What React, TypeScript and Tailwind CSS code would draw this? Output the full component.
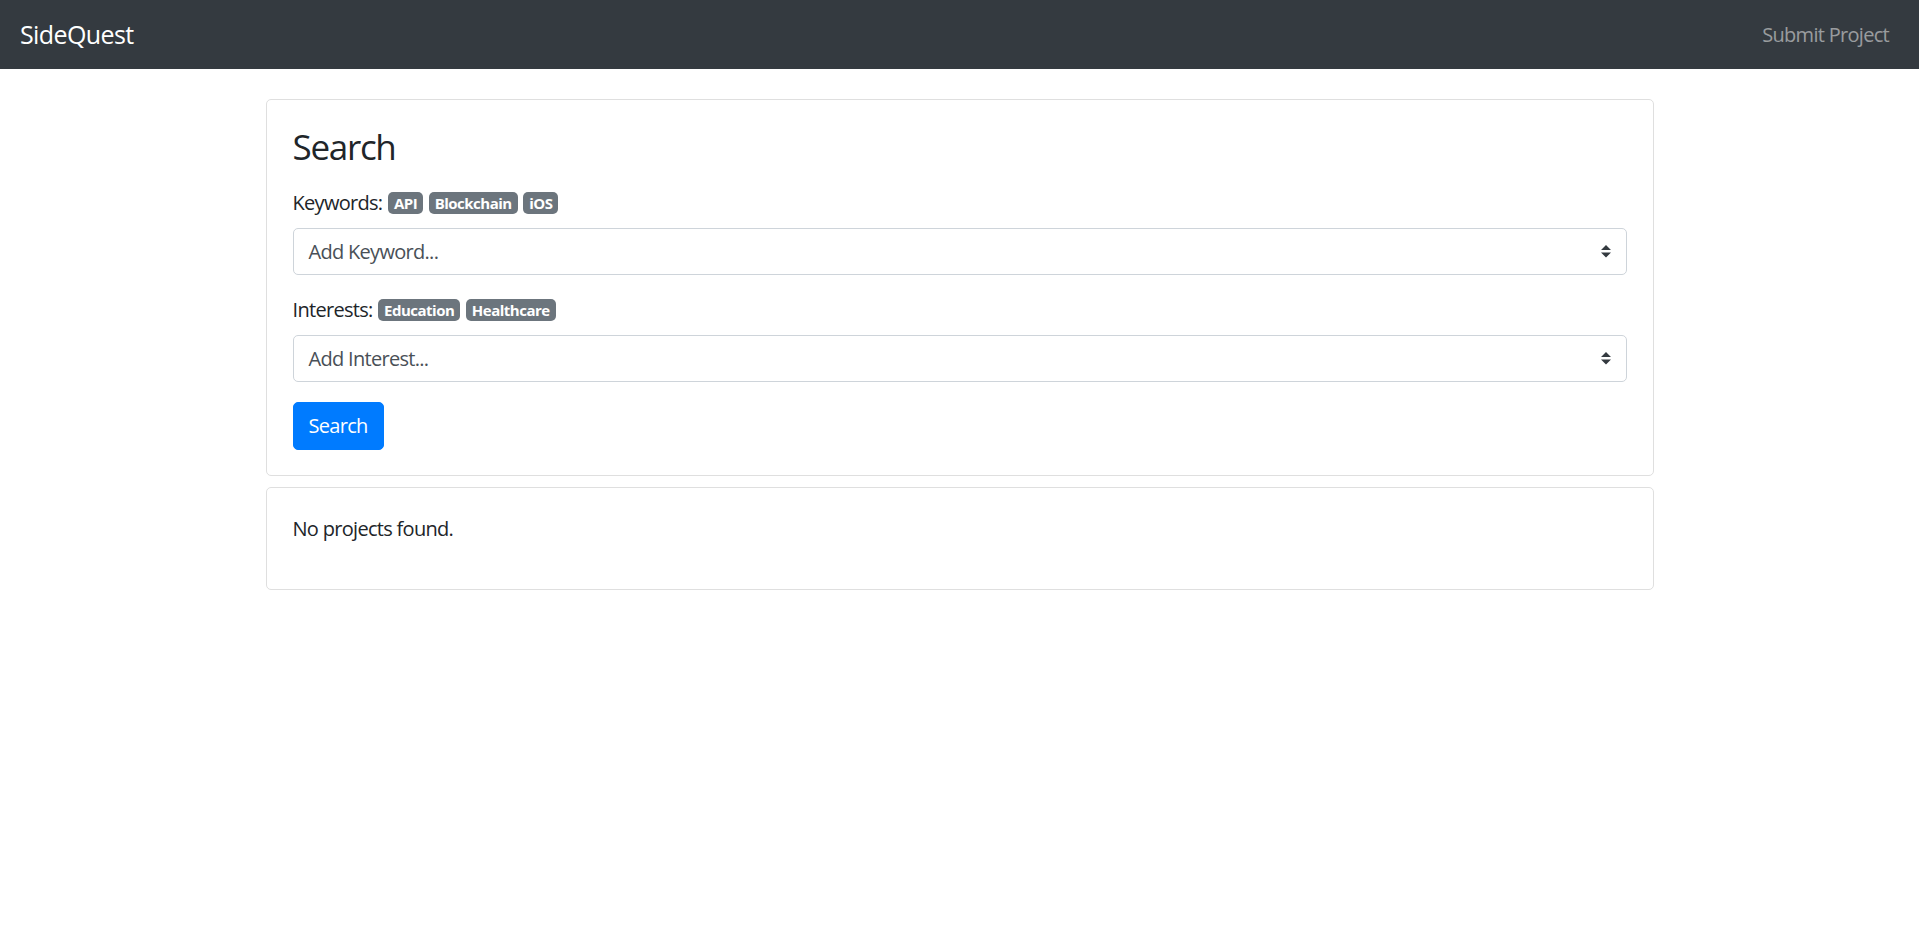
import React from 'react';

const font = { fontFamily: '"Segoe UI", "Open Sans", "Noto Sans", sans-serif' };

function Badge({ label }: { label: string }) {
  return (
    <span className="inline-block bg-[#6c757d] text-white font-bold text-[15px] tracking-[-0.5px] leading-none px-[6px] py-[3.75px] rounded-[5px]">
      {label}
    </span>
  );
}

function FakeSelect({ placeholder }: { placeholder: string }) {
  return (
    <div className="h-[47px] border border-[#ced4da] rounded-[5px] bg-white flex items-center justify-between pl-[15px] pr-[15px]">
      <span className="text-[#495057] text-[20px] leading-[30px]">{placeholder}</span>
      <svg width="10" height="12.5" viewBox="0 0 4 5">
        <path d="M2 0L0 2h4zm0 5L0 3h4z" fill="#343a40" />
      </svg>
    </div>
  );
}

export default function App() {
  const keywords = ['API', 'Blockchain', 'iOS'];
  const interests = ['Education', 'Healthcare'];

  return (
    <div className="min-h-screen bg-white text-[#212529] text-[20px] leading-[30px] tracking-[-0.7px]" style={font}>
      {/* navbar */}
      <nav className="h-[69px] bg-[#343a40] flex items-center justify-between px-[20px]">
        <span className="text-white text-[25px] leading-[37px] tracking-[-0.6px]">SideQuest</span>
        <span className="text-white/50 text-[20px] leading-[30px] px-[10px]">Submit Project</span>
      </nav>

      <div className="w-[1388px] mx-auto mt-[30px]">
        {/* search card */}
        <div className="border border-[#dfdfdf] rounded-[5px] px-[26px] pt-[26px] pb-[25px]">
          <h3 className="text-[35px] leading-[42px] font-normal mb-[20px] tracking-[-1.3px]">Search</h3>

          <div className="mb-[20px]">
            <div className="mb-[10px] flex items-center gap-[5.5px]">
              <span>Keywords:</span>
              {keywords.map((k) => (
                <Badge key={k} label={k} />
              ))}
            </div>
            <FakeSelect placeholder="Add Keyword..." />
          </div>

          <div className="mb-[20px]">
            <div className="mb-[10px] flex items-center gap-[5.5px]">
              <span>Interests:</span>
              {interests.map((k) => (
                <Badge key={k} label={k} />
              ))}
            </div>
            <FakeSelect placeholder="Add Interest..." />
          </div>

          <button className="bg-[#007bff] text-white text-[20px] leading-[30px] px-[15px] py-[8px] rounded-[5px] border border-[#007bff]">
            Search
          </button>
        </div>

        {/* results card */}
        <div className="border border-[#dfdfdf] rounded-[5px] px-[26px] pt-[26px] pb-[25px] mt-[11px]">
          <p className="mb-[20px]">No projects found.</p>
        </div>
      </div>
    </div>
  );
}
